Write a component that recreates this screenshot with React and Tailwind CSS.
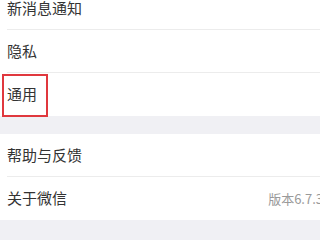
export default function App() {
  const font = { fontFamily: '"Noto Sans CJK SC", "Noto Sans", sans-serif' };
  const Row = ({ children, divider = true, className = "" }) => (
    <div className={`relative h-[43px] bg-white flex items-center pl-[7px] ${className}`}>
      {children}
      {divider && <div className="absolute bottom-0 left-[7px] right-0 h-px bg-[#ececec]" />}
    </div>
  );
  return (
    <div className="w-[320px] h-[240px] overflow-hidden bg-[#f0f0f4] text-[#333] text-[15px]" style={font}>
      <div className="-mt-[13px]">
        <Row>新消息通知</Row>
        <Row>隐私</Row>
        <Row divider={false}>
          <span>通用</span>
          <div className="absolute left-[2px] top-[1px] w-[46px] h-[43px] border-2 border-[#e0383e]" />
        </Row>
        <div className="h-[18px]" />
        <Row>帮助与反馈</Row>
        <Row divider={false} className="justify-between">
          <span>关于微信</span>
          <span className="text-[13px] text-[#9a9a9a] mr-[-3px] whitespace-nowrap">版本6.7.3</span>
        </Row>
      </div>
    </div>
  );
}
